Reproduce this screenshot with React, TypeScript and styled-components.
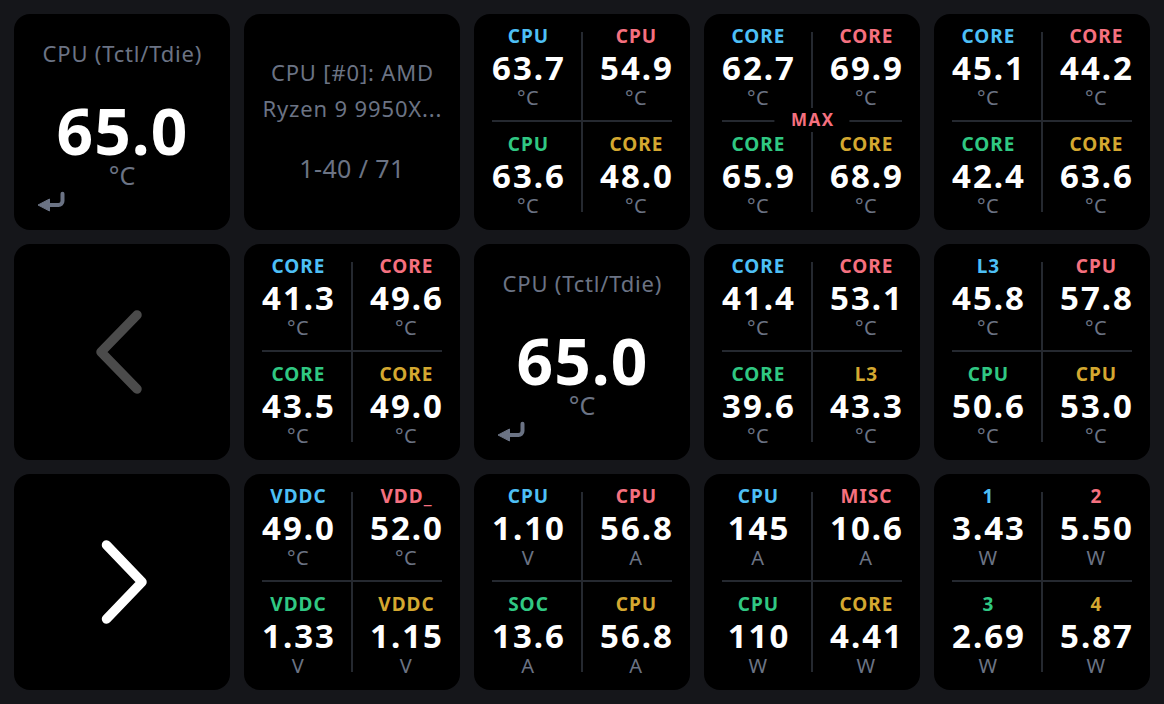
import React from "react";
import styled, { createGlobalStyle } from "styled-components";

const GlobalStyle = createGlobalStyle`
  html, body { margin: 0; padding: 0; background: #15161a; }
  body { font-family: "Noto Sans", "Open Sans", sans-serif; }
`;

const C = {
  blue: "#4dbff5",
  pink: "#f5707f",
  green: "#30c883",
  gold: "#d4a830",
  grey: "#6b7384",
  line: "#252930",
};

const Board = styled.div`
  display: grid;
  grid-template-columns: repeat(5, 216px);
  grid-template-rows: repeat(3, 216px);
  gap: 14px;
  padding: 14px;
  width: 1164px;
  height: 704px;
  box-sizing: border-box;
  background: #15161a;
`;

const Tile = styled.div`
  background: #000;
  border-radius: 16px;
  overflow: hidden;
  position: relative;
  box-sizing: border-box;
`;

/* ---- Big single-value tile ---- */
const BigTile = styled(Tile)`
  display: flex;
  flex-direction: column;
  align-items: center;
  padding-top: 24px;
`;
const BigLabel = styled.div`
  font-size: 22px;
  line-height: 30px;
  color: ${C.grey};
  letter-spacing: 0.8px;
  margin-right: -0.8px;
  white-space: nowrap;
`;
const BigValue = styled.div`
  margin-top: 28px;
  font-size: 64px;
  line-height: 70px;
  font-weight: 700;
  color: #fff;
  letter-spacing: 1px;
  margin-right: -1px;
`;
const BigUnit = styled.div`
  font-size: 25px;
  line-height: 19px;
  color: ${C.grey};
`;
const EnterIcon = styled.svg`
  display: block;
  align-self: flex-start;
  margin: 5px 0 0 22px;
`;

/* ---- Info tile ---- */
const InfoTile = styled(Tile)`
  display: flex;
  flex-direction: column;
  align-items: center;
  padding-top: 40px;
  color: ${C.grey};
`;
const NameLine = styled.div`
  font-size: 22px;
  line-height: 36px;
  white-space: nowrap;
  letter-spacing: 0.85px;
  margin-right: -0.85px;
`;
const PageCount = styled.div`
  margin-top: 27px;
  font-size: 25px;
  line-height: 30px;
  letter-spacing: 0.4px;
  white-space: nowrap;
`;

/* ---- Nav tile ---- */
const NavTile = styled(Tile)`
  display: flex;
  align-items: center;
  justify-content: center;
`;

/* ---- Quad tile ---- */
const QuadTile = styled(Tile)`
  display: grid;
  grid-template-columns: 1fr 1fr;
  grid-template-rows: 1fr 1fr;
  &::before {
    content: "";
    position: absolute;
    left: 107px;
    top: 18px;
    bottom: 18px;
    width: 2px;
    background: ${C.line};
  }
  &::after {
    content: "";
    position: absolute;
    top: 106px;
    left: 18px;
    right: 18px;
    height: 2px;
    background: ${C.line};
  }
`;
const Cell = styled.div`
  display: flex;
  flex-direction: column;
  align-items: center;
  padding-top: 11px;
  position: relative;
  z-index: 1;
`;
const CellLabel = styled.div<{ $color: string }>`
  font-size: 19px;
  line-height: 22px;
  font-weight: 700;
  letter-spacing: 1px;
  margin-right: -1px;
  color: ${(p) => p.$color};
  white-space: nowrap;
`;
const CellValue = styled.div`
  font-size: 33px;
  line-height: 42px;
  font-weight: 700;
  letter-spacing: 2px;
  margin-right: -2px;
  color: #fff;
  white-space: nowrap;
`;
const CellUnit = styled.div`
  font-size: 20px;
  line-height: 17px;
  color: ${C.grey};
  letter-spacing: 0.5px;
`;
const MaxBadge = styled.div`
  position: absolute;
  top: 94px;
  left: 50%;
  transform: translateX(-50%);
  height: 24px;
  padding: 0 15px 0 16.5px;
  background: #000;
  z-index: 2;
  font-size: 17px;
  line-height: 24px;
  font-weight: 700;
  letter-spacing: 1.5px;
  color: ${C.pink};
`;

type Item = [string, string, string];
const colors = [C.blue, C.pink, C.green, C.gold];

const Quad: React.FC<{ items: Item[]; max?: boolean }> = ({ items, max }) => (
  <QuadTile>
    {items.map(([label, value, unit], i) => (
      <Cell key={i}>
        <CellLabel $color={colors[i]}>{label}</CellLabel>
        <CellValue>{value}</CellValue>
        <CellUnit>{unit}</CellUnit>
      </Cell>
    ))}
    {max && <MaxBadge>MAX</MaxBadge>}
  </QuadTile>
);

const Big: React.FC = () => (
  <BigTile>
    <BigLabel>CPU (Tctl/Tdie)</BigLabel>
    <BigValue>65.0</BigValue>
    <BigUnit>°C</BigUnit>
    <EnterIcon width="30" height="24" viewBox="0 0 30 24">
      <path
        d="M12 15 H22.5 A4 4 0 0 0 26.5 11 V3.8"
        fill="none"
        stroke={C.grey}
        strokeWidth="4"
        strokeLinecap="round"
        strokeLinejoin="round"
      />
      <path d="M2 15 L13.5 9 L13.5 21 Z" fill={C.grey} stroke={C.grey} strokeWidth="1" strokeLinejoin="round" />
    </EnterIcon>
  </BigTile>
);

const Chevron: React.FC<{ dir: "left" | "right" }> = ({ dir }) => (
  <svg width="60" height="90" viewBox="0 0 60 90">
    <path
      d={dir === "left" ? "M45 8 L9 45 L45 82" : "M14.5 8 L50 45 L14.5 82"}
      fill="none"
      stroke={dir === "left" ? "#4b4b4b" : "#ffffff"}
      strokeWidth="9.5"
      strokeLinecap="round"
      strokeLinejoin="round"
    />
  </svg>
);

const DEG = "°C";

export default function App() {
  return (
    <>
      <GlobalStyle />
      <Board>
        <Big />
        <InfoTile>
          <NameLine>CPU [#0]: AMD</NameLine>
          <NameLine>Ryzen 9 9950X...</NameLine>
          <PageCount>1-40 / 71</PageCount>
        </InfoTile>
        <Quad
          items={[
            ["CPU", "63.7", DEG],
            ["CPU", "54.9", DEG],
            ["CPU", "63.6", DEG],
            ["CORE", "48.0", DEG],
          ]}
        />
        <Quad
          max
          items={[
            ["CORE", "62.7", DEG],
            ["CORE", "69.9", DEG],
            ["CORE", "65.9", DEG],
            ["CORE", "68.9", DEG],
          ]}
        />
        <Quad
          items={[
            ["CORE", "45.1", DEG],
            ["CORE", "44.2", DEG],
            ["CORE", "42.4", DEG],
            ["CORE", "63.6", DEG],
          ]}
        />

        <NavTile>
          <Chevron dir="left" />
        </NavTile>
        <Quad
          items={[
            ["CORE", "41.3", DEG],
            ["CORE", "49.6", DEG],
            ["CORE", "43.5", DEG],
            ["CORE", "49.0", DEG],
          ]}
        />
        <Big />
        <Quad
          items={[
            ["CORE", "41.4", DEG],
            ["CORE", "53.1", DEG],
            ["CORE", "39.6", DEG],
            ["L3", "43.3", DEG],
          ]}
        />
        <Quad
          items={[
            ["L3", "45.8", DEG],
            ["CPU", "57.8", DEG],
            ["CPU", "50.6", DEG],
            ["CPU", "53.0", DEG],
          ]}
        />

        <NavTile>
          <Chevron dir="right" />
        </NavTile>
        <Quad
          items={[
            ["VDDC", "49.0", DEG],
            ["VDD_", "52.0", DEG],
            ["VDDC", "1.33", "V"],
            ["VDDC", "1.15", "V"],
          ]}
        />
        <Quad
          items={[
            ["CPU", "1.10", "V"],
            ["CPU", "56.8", "A"],
            ["SOC", "13.6", "A"],
            ["CPU", "56.8", "A"],
          ]}
        />
        <Quad
          items={[
            ["CPU", "145", "A"],
            ["MISC", "10.6", "A"],
            ["CPU", "110", "W"],
            ["CORE", "4.41", "W"],
          ]}
        />
        <Quad
          items={[
            ["1", "3.43", "W"],
            ["2", "5.50", "W"],
            ["3", "2.69", "W"],
            ["4", "5.87", "W"],
          ]}
        />
      </Board>
    </>
  );
}
